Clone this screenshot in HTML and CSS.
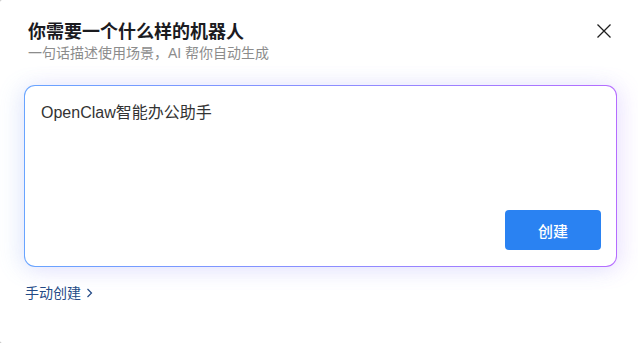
FILE: index.html
```html
<!DOCTYPE html>
<html lang="zh">
<head>
<meta charset="utf-8">
<link rel="stylesheet" href="styles.css">
</head>
<body>
<div class="dialog">
  <div class="header">
    <div class="titles">
      <div class="title">你需要一个什么样的机器人</div>
      <div class="subtitle">一句话描述使用场景，AI 帮你自动生成</div>
    </div>
    <button class="close" aria-label="关闭">
      <svg width="14" height="14" viewBox="0 0 14 14"><path d="M0.5 0.5L13.5 13.5M13.5 0.5L0.5 13.5" stroke="#1f1f1f" stroke-width="1.3" fill="none"/></svg>
    </button>
  </div>
  <div class="prompt">
    <div class="prompt-text">OpenClaw智能办公助手</div>
    <div class="actions"><button class="create">创建</button></div>
  </div>
  <a class="manual" href="#">手动创建<svg width="7" height="10" viewBox="0 0 7 10"><path d="M1.5 1L5.5 5L1.5 9" stroke="#234a86" stroke-width="1.2" fill="none"/></svg></a>
</div>
</body>
</html>
```
FILE: styles.css
```css
html, body {
  margin: 0;
  padding: 0;
  height: 100%;
  background: #ffffff;
}
body {
  font-family: "Liberation Sans", "Noto Sans CJK SC", sans-serif;
}
.dialog {
  box-sizing: border-box;
  height: 343px;
  width: 638px;
  background: #fff;
  border-radius: 2px 0 0 2px;
  box-shadow: -1px 0 0 #b0b0b0;
  padding: 17px 21px 0 24px;
  display: flex;
  flex-direction: column;
}
.header {
  display: flex;
  justify-content: space-between;
  align-items: flex-start;
  padding-left: 4px;
}
.title {
  font-family: "Noto Sans CJK SC", sans-serif;
  font-weight: 700;
  font-size: 18px;
  line-height: 26px;
  color: #1b1b1f;
}
.subtitle {
  font-size: 14px;
  line-height: 20px;
  color: #8c8c8c;
  font-family: "Liberation Sans", "Noto Sans CJK SC", sans-serif;
}
.close {
  border: 0;
  background: none;
  padding: 0;
  margin: 7px 6px 0 0;
  width: 14px;
  height: 14px;
  display: flex;
}
.prompt {
  margin-top: 22px;
  height: 182px;
  box-sizing: border-box;
  border: 1px solid transparent;
  border-radius: 11px;
  background: linear-gradient(#fff, #fff) padding-box,
              linear-gradient(90deg, #68a4ff, #8e8cff 55%, #b56cff) border-box;
  box-shadow: -6px 2px 22px rgba(110, 165, 235, 0.16), 6px 2px 22px rgba(180, 120, 255, 0.16);
  padding: 15px 15px 16px 16px;
  display: flex;
  flex-direction: column;
}
.prompt-text {
  flex: 1;
  font-size: 16px;
  line-height: 24px;
  color: #333;
}
.actions {
  display: flex;
  justify-content: flex-end;
}
.create {
  width: 96px;
  height: 40px;
  border: 0;
  border-radius: 4px;
  background: #2a82f2;
  color: #fff;
  font-family: "Noto Sans CJK SC", sans-serif;
  font-weight: 500;
  font-size: 15px;
}
.manual {
  margin-top: 16px;
  display: flex;
  align-items: center;
  gap: 5px;
  font-size: 14px;
  line-height: 20px;
  color: #234a86;
  text-decoration: none;
  align-self: flex-start;
  margin-left: 1px;
}
```
